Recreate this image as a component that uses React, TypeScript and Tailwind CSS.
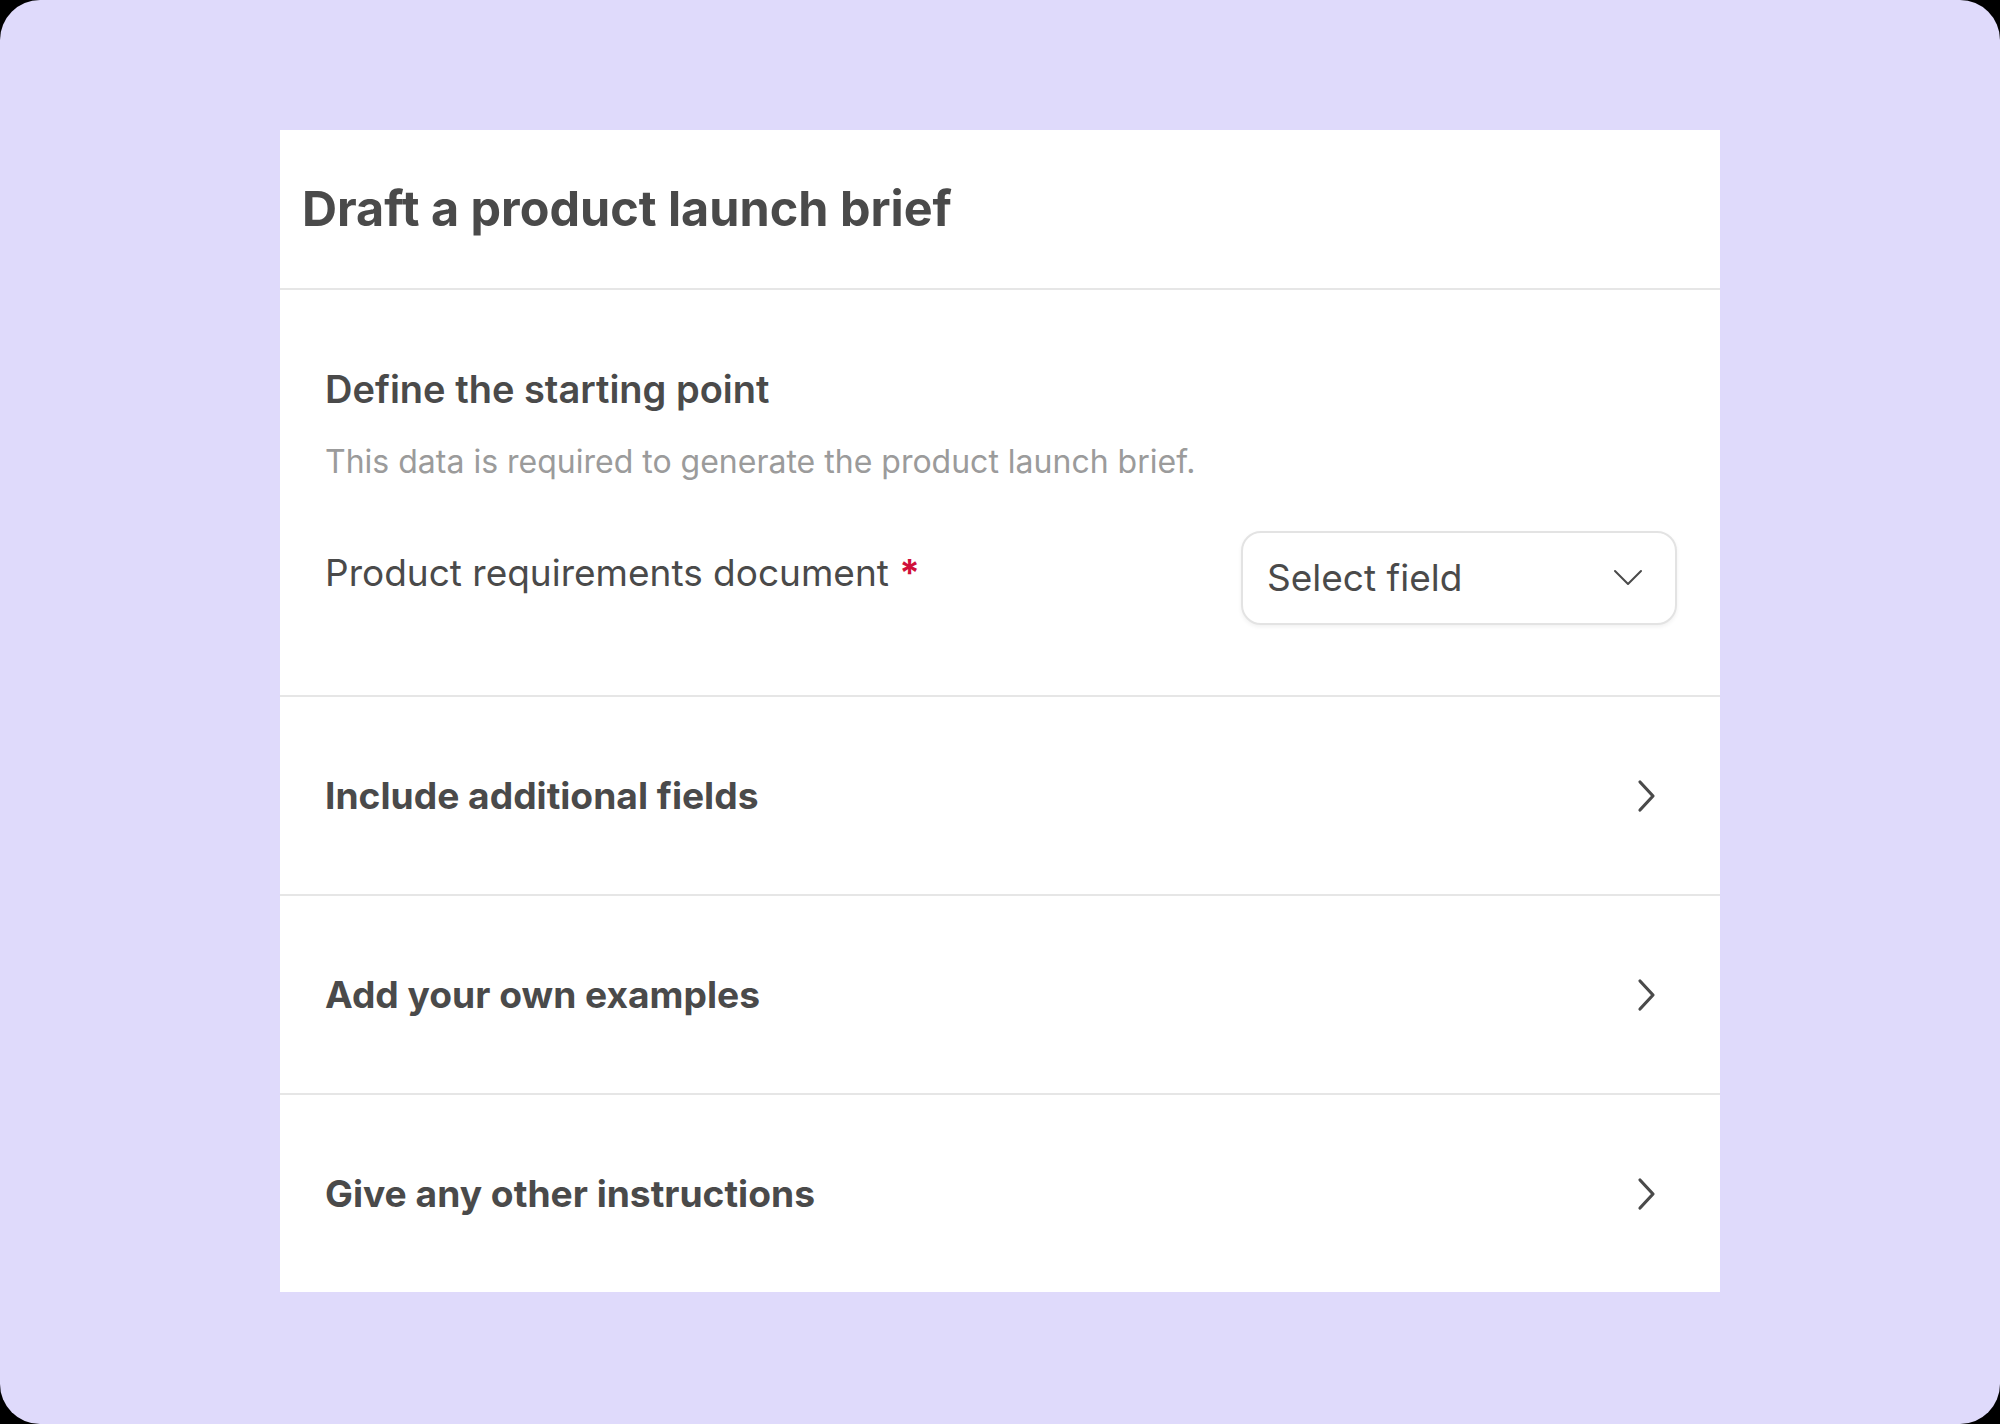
import React from "react";

const font = { fontFamily: "Inter, 'Noto Sans', sans-serif" };

function ChevronRight() {
  return (
    <svg width="22" height="34" viewBox="0 0 22 34" fill="none" className="shrink-0">
      <path d="M4 3 L17 17 L4 31" stroke="#4a4a4a" strokeWidth="3.2" strokeLinecap="round" strokeLinejoin="round" />
    </svg>
  );
}

function ChevronDown() {
  return (
    <svg width="30" height="18" viewBox="0 0 30 18" fill="none" className="shrink-0">
      <path d="M2 2 L15 15 L28 2" stroke="#4a4a4a" strokeWidth="2" strokeLinecap="round" strokeLinejoin="round" />
    </svg>
  );
}

function Row({ title }: { title: string }) {
  return (
    <div className="flex h-[199px] items-center justify-between border-t-2 border-[#e6e6e6] pl-[45px] pr-[62px]">
      <span className="text-[37.2px] font-bold text-[#4a4a4a]">{title}</span>
      <ChevronRight />
    </div>
  );
}

export default function App() {
  return (
    <div className="h-[1424px] w-[2000px] bg-black" style={font}>
      <div className="flex h-full w-full rounded-[40px] bg-[#dfdafb] pl-[280px] pt-[130px]">
        <div className="flex h-[1162px] w-[1440px] flex-col bg-white">
          <div className="flex h-[158px] items-center pl-[22px]">
            <h1 className="text-[48.5px] font-bold text-[#4a4a4a]">Draft a product launch brief</h1>
          </div>
          <div className="flex h-[407px] flex-col border-t-2 border-[#e6e6e6] pl-[45px] pr-[43px] pt-[74px]">
            <h2 className="text-[38px] font-semibold leading-[50px] text-[#4a4a4a]">Define the starting point</h2>
            <p className="mt-[28px] text-[32px] leading-[40px] text-[#9b9b9b]">
              This data is required to generate the product launch brief.
            </p>
            <div className="mt-[49px] flex items-start justify-between">
              <div className="pt-[19px] text-[37px] leading-[46px] text-[#4a4a4a]">
                Product requirements document <span className="font-bold text-[#d0103a]">*</span>
              </div>
              <button className="flex h-[94px] w-[436px] items-center justify-between rounded-[20px] border-2 border-[#e3e3e3] bg-white pl-[24px] pr-[32px] shadow-[0_2px_4px_rgba(0,0,0,0.06)]">
                <span className="text-[37px] text-[#4a4a4a]">Select field</span>
                <ChevronDown />
              </button>
            </div>
          </div>
          <Row title="Include additional fields" />
          <Row title="Add your own examples" />
          <Row title="Give any other instructions" />
        </div>
      </div>
    </div>
  );
}
